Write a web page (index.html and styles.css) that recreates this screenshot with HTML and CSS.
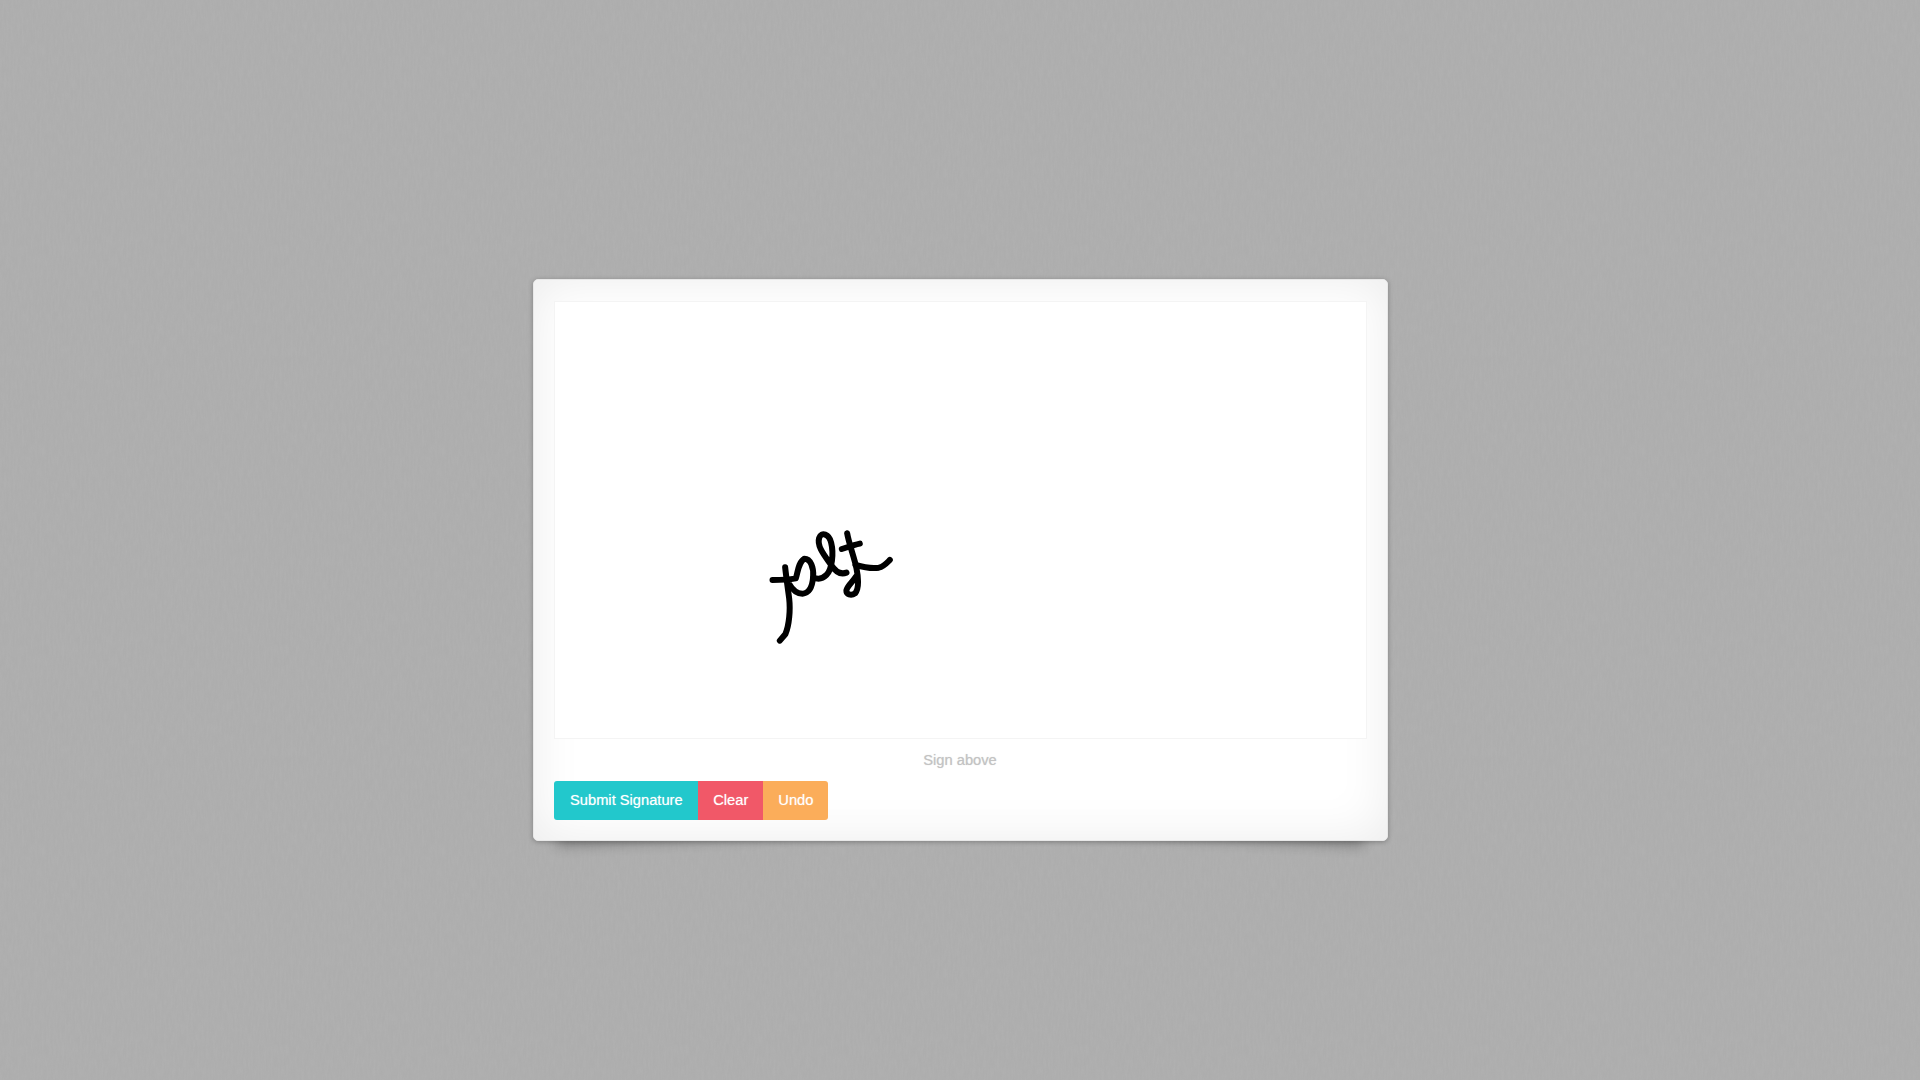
FILE: index.html
```html
<!DOCTYPE html>
<html lang="en">
<head>
    <meta charset="UTF-8">
    <meta name="viewport" content="width=device-width, initial-scale=1.0">
    <title>Signature Pad</title>
    <link rel="stylesheet" href="styles.css">
</head>
<body>
    <div class="signature-pad">
        <div class="pad-body">
            <svg class="pad-canvas" viewBox="0 0 810 436" aria-hidden="true">
                <g class="ink" transform="translate(185 208) scale(.3333)">
                    <path d="M96 210 C120 210 150 208 166 205 C172 190 172 158 192 146 C210 146 220 172 218 200 C216 226 208 250 186 251 C166 251 155 238 146 222"/>
                    <path d="M134 172 C137 200 142 235 146 265 C150 300 146 345 135 372 L118 392"/>
                    <path d="M218 202 C230 208 245 208 258 195 C275 178 280 130 272 98 C266 72 243 64 236 84 C228 110 255 140 272 165 C285 185 300 195 318 188"/>
                    <path d="M320 70 C325 100 342 145 348 175 C354 205 356 235 344 250 C332 258 316 254 318 240 C322 225 338 215 346 200"/>
                    <path d="M304 117 C320 112 340 105 358 101"/>
                    <path d="M345 165 C370 172 395 176 415 173 C430 170 440 158 448 150"/>
                </g>
            </svg>
        </div>
        <div class="pad-footer">
            <div class="pad-hint">Sign above</div>
            <div class="pad-actions">
                <button class="btn btn-save">Submit Signature</button>
                <button class="btn btn-clear">Clear</button>
                <button class="btn btn-undo">Undo</button>
            </div>
        </div>
    </div>
</body>
</html>
```

FILE: styles.css
```css
* {
    box-sizing: border-box;
}
body {
    margin: 0;
    height: 100vh;
    padding-top: 40px;
    display: flex;
    justify-content: center;
    align-items: center;
    font-family: "Liberation Sans", Arial, sans-serif;
    background-color: #acacac;
    background-image: url("data:image/svg+xml,%3Csvg xmlns='http://www.w3.org/2000/svg' width='400' height='400'%3E%3Cfilter id='n'%3E%3CfeTurbulence type='fractalNoise' baseFrequency='.45 .09' numOctaves='3' stitchTiles='stitch'/%3E%3CfeColorMatrix values='0 0 0 0 .5 0 0 0 0 .5 0 0 0 0 .5 0 0 0 .3 0'/%3E%3C/filter%3E%3Crect width='400' height='400' filter='url(%23n)'/%3E%3C/svg%3E");
}
.signature-pad {
    position: relative;
    width: 855px;
    padding: 21px 20px 20px;
    background-color: #fff;
    border: 1px solid #e8e8e8;
    border-radius: 5px;
    box-shadow: 0 1px 5px rgba(0, 0, 0, .27), inset 0 0 49px rgba(0, 0, 0, .08);
}
/* curled paper shadow under the bottom corners */
.signature-pad::before,
.signature-pad::after {
    content: "";
    position: absolute;
    z-index: -1;
    width: 45%;
    height: 12px;
    bottom: 12px;
    box-shadow: 0 9px 13px rgba(0, 0, 0, .32);
}
.signature-pad::before {
    left: 24px;
    transform: skew(-3deg) rotate(-2.5deg);
}
.signature-pad::after {
    right: 24px;
    transform: skew(3deg) rotate(2.5deg);
}
.pad-body {
    border: 1px solid #f4f4f4;
    background-color: #fff;
}
.pad-canvas {
    display: block;
    width: 100%;
    height: 436px;
    filter: blur(.4px);
}
.ink path {
    fill: none;
    stroke: #000;
    stroke-width: 18;
    stroke-linecap: round;
    stroke-linejoin: round;
}
.pad-hint {
    margin-top: 13px;
    height: 17px;
    line-height: 17px;
    text-align: center;
    font-size: 14.7px;
    color: #c3c3c3;
    text-shadow: 0 0 1px rgba(195, 195, 195, .7);
}
.pad-actions {
    display: flex;
    margin-top: 12px;
}
.btn {
    height: 39px;
    padding: 0 15.5px 2px 16.5px;
    border: 0;
    color: #fff;
    font-family: inherit;
    font-size: 14.7px;
    text-shadow: 0 0 1px rgba(255, 255, 255, .6);
}
.btn-save {
    background-color: #22c8cc;
    border-radius: 3px 0 0 3px;
}
.btn-clear {
    padding: 0 15px 2px;
    background-color: #f15868;
}
.btn-undo {
    padding: 0 15px 2px;
    background-color: #fbad5a;
    border-radius: 0 3px 3px 0;
}
```
